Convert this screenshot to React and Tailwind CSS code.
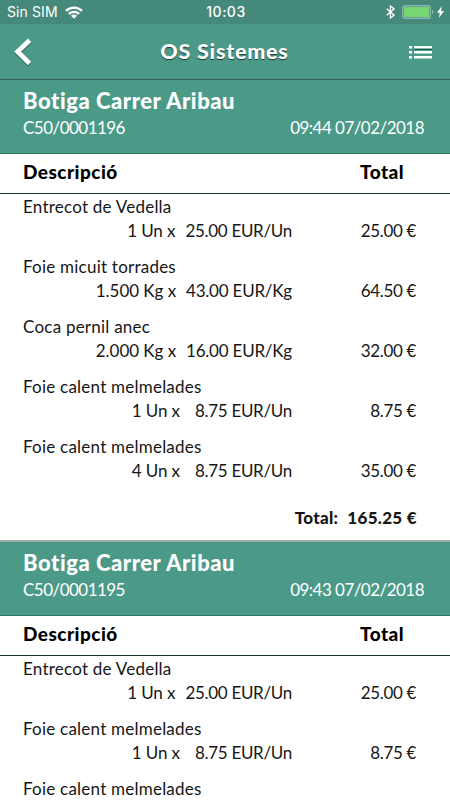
import React from 'react';

const receipts = [
  {
    id: 'C50/0001196',
    shop: 'Botiga Carrer Aribau',
    date: '09:44 07/02/2018',
    total: '165.25 €',
    lines: [
      { name: 'Entrecot de Vedella', qty: '1', unit: 'Un', price: '25.00', total: '25.00 €' },
      { name: 'Foie micuit torrades', qty: '1.500', unit: 'Kg', price: '43.00', total: '64.50 €' },
      { name: 'Coca pernil anec', qty: '2.000', unit: 'Kg', price: '16.00', total: '32.00 €' },
      { name: 'Foie calent melmelades', qty: '1', unit: 'Un', price: '8.75', total: '8.75 €' },
      { name: 'Foie calent melmelades', qty: '4', unit: 'Un', price: '8.75', total: '35.00 €' },
    ],
  },
  {
    id: 'C50/0001195',
    shop: 'Botiga Carrer Aribau',
    date: '09:43 07/02/2018',
    lines: [
      { name: 'Entrecot de Vedella', qty: '1', unit: 'Un', price: '25.00', total: '25.00 €' },
      { name: 'Foie calent melmelades', qty: '1', unit: 'Un', price: '8.75', total: '8.75 €' },
      { name: 'Foie calent melmelades' },
    ],
  },
];

const StatusBar = () => (
  <div className="h-6 shrink-0 bg-[#45897a] grid grid-cols-3 items-center pl-[7px] pr-1.5 text-white font-['Inter',sans-serif] text-[14px] leading-6">
    <div className="flex items-center gap-[7px]">
      <span className="tracking-[0.1px]">Sin SIM</span>
      <svg width="18" height="13" viewBox="0 0 18 13" fill="none" stroke="currentColor" strokeWidth="2.3">
        <path d="M1 4.9a11.4 11.4 0 0 1 16 0" />
        <path d="M3.9 7.9a7.3 7.3 0 0 1 10.2 0" />
        <path d="M9 12.8 6 9.8a4.2 4.2 0 0 1 6 0z" fill="currentColor" stroke="none" />
      </svg>
    </div>
    <span className="text-center font-medium tracking-[0.5px] pl-px">10:03</span>
    <div className="flex items-center justify-end">
      <svg width="9" height="14" viewBox="0 0 9 14" fill="none" stroke="currentColor" strokeWidth="1.3">
        <path d="M0.7 3.8 8 10.1 4.4 13V1L8 3.9 0.7 10.2" />
      </svg>
      <svg className="ml-[7px]" width="32" height="14" viewBox="0 0 32 14">
        <rect x="0.7" y="0.7" width="27.6" height="12.6" rx="2.4" fill="none" stroke="#8cb9af" strokeWidth="1.4" />
        <rect x="2" y="2" width="25" height="10" rx="1" fill="#76d672" />
        <path d="M30 4.7a2.5 2.5 0 0 1 0 4.6z" fill="#8cb9af" />
      </svg>
      <svg className="ml-[3px]" width="7" height="12" viewBox="0 0 7 12" fill="currentColor">
        <path d="M4.8 0 0 6.7h2.8L1.9 12 7 5H4z" />
      </svg>
    </div>
  </div>
);

const NavBar = () => (
  <div className="h-14 shrink-0 bg-[#4b9a88] border-b border-[#2e6458] flex items-center justify-between pl-[14px] pr-[18px] text-white">
    <svg className="drop-shadow-[0_1px_0_rgba(0,0,0,0.5)]" width="24" height="28" viewBox="0 0 24 28" fill="none" stroke="currentColor" strokeWidth="4.8">
      <path d="M15.6 2.2 3.6 13.8l12 11.6" />
    </svg>
    <h1 className="text-[21.5px] font-black tracking-[0.75px] pl-[2px] [text-shadow:0_1px_1px_rgba(0,0,0,0.65)]">OS Sistemes</h1>
    <svg width="23" height="14" viewBox="0 0 23 14" fill="currentColor">
      <path d="M5 3h18v2H5z" fill="#17644f" />
      <path d="M0 1h3v2.5H0zM5 1h18v2.5H5zM0 6h3v2.5H0zM5 6h18v2.5H5zM0 11h3v2.5H0zM5 11h18v2.5H5z" />
    </svg>
  </div>
);

const ReceiptLine = ({ line }) => (
  <div className="h-[60px] pl-[23px] pr-[33px] pt-[1px] text-[17px] leading-6 tracking-[0.23px]">
    <div>{line.name}</div>
    {line.total && (
      <div className="flex text-right whitespace-nowrap">
        {/* short prices are padded with an extra space */}
        <div className={`w-[269px] flex justify-end ${line.price.length < 5 ? 'gap-[15px]' : 'gap-[10px]'}`}>
          <span className={line.unit === 'Kg' ? 'tracking-[-0.05px]' : 'tracking-[-0.1px]'}>{line.qty} {line.unit} x</span>
          <span className={line.unit === 'Kg' ? 'tracking-[-0.22px]' : 'tracking-[-0.3px]'}>{line.price} EUR/{line.unit}</span>
        </div>
        <span className="w-[124px] tracking-[-0.35px]">{line.total}</span>
      </div>
    )}
  </div>
);

const Receipt = ({ receipt }) => (
  <section className="shrink-0 border-b-2 border-[#9fa8a5]">
    <header className="h-[74px] bg-[#4b9a88] border-b border-[#2f7866] text-white pl-[23px] pr-[26px] pt-[7px]">
      <h2 className="text-[22px] leading-7 font-black tracking-[0.55px]">{receipt.shop}</h2>
      <div className="flex justify-between text-[17px] leading-[26px] tracking-[-0.53px]">
        <span>{receipt.id}</span>
        <span>{receipt.date}</span>
      </div>
    </header>
    <div className="h-10 border-b border-[#14382f] flex justify-between pl-[23px] pr-[46px] text-[19px] leading-9 font-black tracking-[0.45px] text-black">
      <span>Descripció</span>
      <span>Total</span>
    </div>
    {receipt.lines.map((line, i) => (
      <ReceiptLine key={i} line={line} />
    ))}
    {receipt.total && (
      <div className="h-[46px] flex justify-end gap-[9px] pr-[33px] text-[17px] leading-[47px] font-black tracking-[0.3px]">
        <span>Total:</span>
        <span>{receipt.total}</span>
      </div>
    )}
  </section>
);

const App = () => (
  <div className="w-full h-screen overflow-hidden flex flex-col bg-white text-[#161616] font-['Lato',sans-serif]">
    <StatusBar />
    <NavBar />
    <main className="flex-1 min-h-0 overflow-hidden flex flex-col">
      {receipts.map((receipt) => (
        <Receipt key={receipt.id} receipt={receipt} />
      ))}
    </main>
  </div>
);

export default App;
